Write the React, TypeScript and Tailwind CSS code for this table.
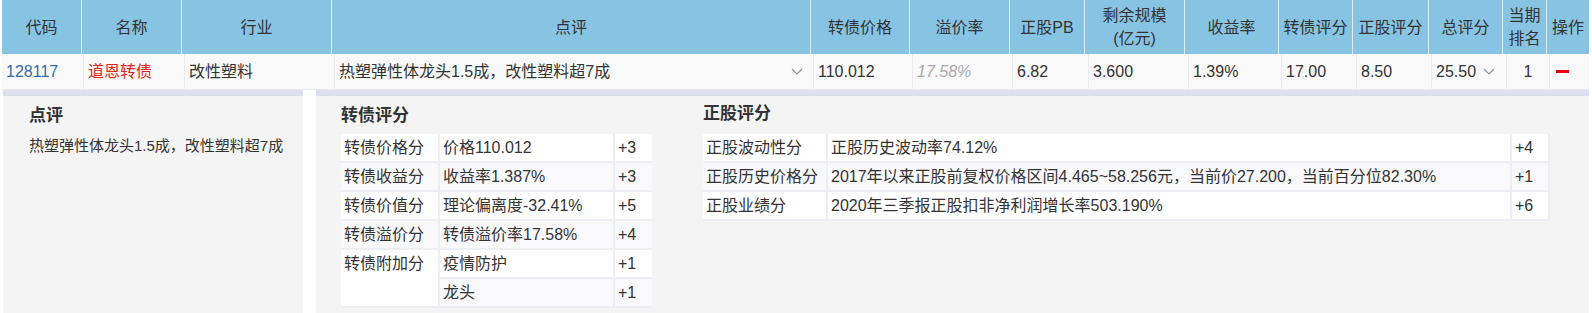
const font = "font-['Liberation_Sans','Noto_Sans_CJK_SC',sans-serif]";

const headCols = [
    { label: "代码", w: "w-[80px]" },
    { label: "名称", w: "w-[100px]" },
    { label: "行业", w: "w-[150px]" },
    { label: "点评", w: "w-[479px]" },
    { label: "转债价格", w: "w-[99px]" },
    { label: "溢价率", w: "w-[100px]" },
    { label: "正股PB", w: "w-[75px]" },
    { label: "剩余规模(亿元)", w: "w-[100px] px-[14px]" },
    { label: "收益率", w: "w-[94px]" },
    { label: "转债评分", w: "w-[74px]" },
    { label: "正股评分", w: "w-[76px]" },
    { label: "总评分", w: "w-[74px]" },
    { label: "当期排名", w: "w-[44px] px-[5px]" },
    { label: "操作", w: "w-[42px] border-r-0" },
];

const bondScores = [
    { name: "转债价格分", desc: "价格110.012", pts: "+3" },
    { name: "转债收益分", desc: "收益率1.387%", pts: "+3" },
    { name: "转债价值分", desc: "理论偏离度-32.41%", pts: "+5" },
    { name: "转债溢价分", desc: "转债溢价率17.58%", pts: "+4" },
];

const stockScores = [
    { name: "正股波动性分", desc: "正股历史波动率74.12%", pts: "+4" },
    { name: "正股历史价格分", desc: "2017年以来正股前复权价格区间4.465~58.256元，当前价27.200，当前百分位82.30%", pts: "+1" },
    { name: "正股业绩分", desc: "2020年三季报正股扣非净利润增长率503.190%", pts: "+6" },
];

function Cell({ className, children }: { className: string; children?: React.ReactNode }) {
    return (
        <div className={`flex h-full items-center border-r border-[#e8eaf0] px-[4px] ${className}`}>
            {children}
        </div>
    );
}

// thin wide caret used by the dropdown cells
function Chevron() {
    return (
        <svg width="12" height="7" viewBox="0 0 12 7" className="shrink-0">
            <polyline points="1,1 6,6 11,1" fill="none" stroke="#8c919b" strokeWidth="1.1" />
        </svg>
    );
}

export default function App() {
    return (
        <div className={`h-[313px] w-[1592px] overflow-hidden bg-white pl-[2px] pr-[3px] text-[#333] ${font}`}>
            {/* table header */}
            <div className="flex h-[54px] bg-[#87c4e4] text-[16px]">
                {headCols.map((c) => (
                    <div
                        key={c.label}
                        className={`flex items-center justify-center border-r border-[#dcedf7] text-center leading-[23px] ${c.w}`}
                    >
                        {c.label}
                    </div>
                ))}
            </div>

            {/* data row */}
            <div className="flex h-[36px] border-b border-[#e8eaf0] bg-[#f9f9f9] text-[16px]">
                <Cell className="w-[82px] text-[#2f6fae]">128117</Cell>
                <Cell className="w-[101px] text-[#e3241b]">道恩转债</Cell>
                <Cell className="w-[150px]">改性塑料</Cell>
                <Cell className="w-[479px] justify-between pr-[10px]">
                    <span>热塑弹性体龙头1.5成，改性塑料超7成</span>
                    <Chevron />
                </Cell>
                <Cell className="w-[99px]">110.012</Cell>
                <Cell className="w-[100px] italic text-[#aaaaaa]">17.58%</Cell>
                <Cell className="w-[76px]">6.82</Cell>
                <Cell className="w-[100px]">3.600</Cell>
                <Cell className="w-[93px]">1.39%</Cell>
                <Cell className="w-[75px]">17.00</Cell>
                <Cell className="w-[75px]">8.50</Cell>
                <Cell className="w-[75px] gap-[7px]">
                    <span>25.50</span>
                    <Chevron />
                </Cell>
                <Cell className="w-[43px] justify-center">1</Cell>
                <Cell className="flex-1 border-r-0 pl-[6px]">
                    <span className="h-[3px] w-[13px] bg-[#e60012]" />
                </Cell>
            </div>

            {/* expanded detail */}
            <div className="flex h-[230px] gap-[13px] pl-[1px]">
                <div className="w-[300px] border-t-[6px] border-[#dde1ef] bg-[#f4f4f4] px-[26px]">
                    <div className="mt-[8px] text-[17px] font-bold leading-[24px]">点评</div>
                    <div className="mt-[7px] whitespace-nowrap text-[15px] leading-[22px]">热塑弹性体龙头1.5成，改性塑料超7成</div>
                </div>

                <div className="flex flex-1 gap-[51px] border-t-[6px] border-[#dde1ef] bg-[#f4f4f4] pl-[25px]">
                    <div className="w-[311px]">
                        <div className="mt-[8px] mb-[6px] text-[17px] font-bold leading-[24px]">转债评分</div>
                        <div className="text-[16px]">
                            {bondScores.map((r, i) => (
                                <div
                                    key={r.name}
                                    className={`flex h-[29px] border-b-2 border-[#eceef4] ${i % 2 ? "bg-[#f9f9fb]" : "bg-white"}`}
                                >
                                    <div className="flex w-[99px] items-center border-r-2 border-[#eceef4] px-[3px]">{r.name}</div>
                                    <div className="flex w-[175px] items-center border-r-2 border-[#eceef4] px-[3px]">{r.desc}</div>
                                    <div className="flex flex-1 items-center px-[3px]">{r.pts}</div>
                                </div>
                            ))}
                            <div className="flex h-[58px]">
                                <div className="w-[99px] border-r-2 border-b-2 border-[#eceef4] bg-white px-[3px] pt-[2px] leading-[24px]">
                                    转债附加分
                                </div>
                                <div className="flex-1">
                                    <div className="flex h-[29px] border-b-2 border-[#eceef4] bg-white">
                                        <div className="flex w-[175px] items-center border-r-2 border-[#eceef4] px-[3px]">疫情防护</div>
                                        <div className="flex flex-1 items-center px-[3px]">+1</div>
                                    </div>
                                    <div className="flex h-[29px] border-b-2 border-[#eceef4] bg-[#f9f9fb]">
                                        <div className="flex w-[175px] items-center border-r-2 border-[#eceef4] px-[3px]">龙头</div>
                                        <div className="flex flex-1 items-center px-[3px]">+1</div>
                                    </div>
                                </div>
                            </div>
                        </div>
                    </div>

                    <div className="w-[847px]">
                        <div className="mt-[6px] mb-[8px] text-[17px] font-bold leading-[24px]">正股评分</div>
                        <div className="text-[16px]">
                            {stockScores.map((r, i) => (
                                <div
                                    key={r.name}
                                    className={`flex h-[29px] border-b-2 border-[#eceef4] ${i % 2 ? "bg-[#f9f9fb]" : "bg-white"}`}
                                >
                                    <div className="flex w-[125px] items-center border-r-2 border-[#eceef4] px-[3px]">{r.name}</div>
                                    <div className="flex w-[684px] items-center border-r-2 border-[#eceef4] px-[3px]">{r.desc}</div>
                                    <div className="flex flex-1 items-center border-r-2 border-[#eceef4] px-[3px]">{r.pts}</div>
                                </div>
                            ))}
                        </div>
                    </div>
                </div>
            </div>
        </div>
    );
}
